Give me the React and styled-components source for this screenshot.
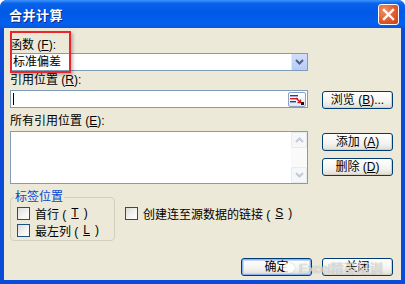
import React from 'react'
import styled, { createGlobalStyle } from 'styled-components'

const Global = createGlobalStyle`
  html, body { margin: 0; padding: 0; background: #fff; }
  * { box-sizing: border-box; }
`

const FONT = `"Liberation Sans", "Noto Sans CJK SC", sans-serif`

const App = () => {
  return (
    <>
      <Global />
      <Window>
        <TitleBar>
          <Title>合并计算</Title>
          <CloseBtn>
            <svg width="13" height="13" viewBox="0 0 13 13">
              <path d="M2 2 L11 11 M11 2 L2 11" stroke="#fff" strokeWidth="2.4" strokeLinecap="square" />
            </svg>
          </CloseBtn>
        </TitleBar>

        <Body>
          <Label $mt={0}>函数 (<u>F</u>):</Label>
          <Combo>
            <FieldText>标准偏差</FieldText>
            <DropBtn>
              <svg width="9" height="6" viewBox="0 0 9 6">
                <path d="M1 1 L4.5 4.5 L8 1" stroke="#4D6185" strokeWidth="2" fill="none" />
              </svg>
            </DropBtn>
          </Combo>

          <Label $mt={2}>引用位置 (<u>R</u>):</Label>
          <Row $mt={3}>
            <TextField>
              <Caret />
              <RefBtn>
                <svg width="14" height="11" viewBox="0 0 14 11">
                  <rect x="0" y="1" width="8" height="1.4" fill="#1D3FA8" />
                  <rect x="0" y="4" width="8" height="1.4" fill="#D21A1A" />
                  <rect x="0" y="7" width="6" height="1.4" fill="#1D3FA8" />
                  <path d="M6 4 L10.5 8.5 M10.5 5.5 L10.5 8.5 L7.5 8.5" stroke="#D21A1A" strokeWidth="1.4" fill="none" />
                  <rect x="11" y="8" width="3" height="3" fill="#111" />
                </svg>
              </RefBtn>
            </TextField>
            <Button $w={71} $mt={1}>浏览 (<u>B</u>)...</Button>
          </Row>

          <Label $mt={5}>所有引用位置 (<u>E</u>):</Label>
          <Row $mt={3}>
            <ListBox>
              <ScrollBar>
                <ScrollArrow>
                  <svg width="9" height="6" viewBox="0 0 9 6">
                    <path d="M1 5 L4.5 1.5 L8 5" stroke="#C4CAD6" strokeWidth="2" fill="none" />
                  </svg>
                </ScrollArrow>
                <ScrollArrow>
                  <svg width="9" height="6" viewBox="0 0 9 6">
                    <path d="M1 1 L4.5 4.5 L8 1" stroke="#C4CAD6" strokeWidth="2" fill="none" />
                  </svg>
                </ScrollArrow>
              </ScrollBar>
            </ListBox>
            <ButtonCol>
              <Button $w={71}>添加 (<u>A</u>)</Button>
              <Button $w={71}>删除 (<u>D</u>)</Button>
            </ButtonCol>
          </Row>

          <OptionsRow>
            <GroupBox>
              <GroupLegend>标签位置</GroupLegend>
              <CheckItem $mt={9}><CheckBox />首行 (<u>T</u>)</CheckItem>
              <CheckItem $mt={3}><CheckBox />最左列 (<u>L</u>)</CheckItem>
            </GroupBox>
            <LinkOption>
              <CheckItem><CheckBox />创建连至源数据的链接 (<u>S</u>)</CheckItem>
            </LinkOption>
          </OptionsRow>

          <Footer>
            <Button $w={71} $default>确定</Button>
            <Button $w={71}>关闭</Button>
          </Footer>

          <Highlight />
          <Watermark>
            <WmIcon />
            Excel精英培训
          </Watermark>
        </Body>
      </Window>
    </>
  )
}

const Window = styled.div`
  width: 405px;
  height: 284px;
  display: flex;
  flex-direction: column;
  font-family: ${FONT};
  font-size: 12px;
  color: #000;
  background: #0A4BD8;
  border-radius: 7px 7px 0 0;
  overflow: hidden;
`

const TitleBar = styled.div`
  height: 28px;
  flex: none;
  display: flex;
  align-items: center;
  justify-content: space-between;
  padding: 0 6px 0 9px;
  background: linear-gradient(to bottom, #3D95FF 0%, #0A63EA 12%, #0058E6 45%, #0460EE 85%, #0A55DC 100%);
`

const Title = styled.div`
  color: #fff;
  font-family: "Noto Sans CJK SC", sans-serif;
  font-weight: bold;
  font-size: 13px;
  letter-spacing: 0.5px;
  text-shadow: 1px 1px 0 #0A2A8A;
`

const CloseBtn = styled.div`
  width: 21px;
  height: 21px;
  border: 1px solid #fff;
  border-radius: 3px;
  background: radial-gradient(circle at 30% 30%, #F0906A 0%, #E05A2C 55%, #C8401A 100%);
  display: flex;
  align-items: center;
  justify-content: center;
`

const Body = styled.div`
  position: relative;
  flex: 1;
  margin: 0 4px 4px 4px;
  background: #ECE9D8;
  padding: 10px 8px 0 6px;
  display: flex;
  flex-direction: column;
`

const Label = styled.div`
  height: 14px;
  line-height: 14px;
  margin-top: ${p => p.$mt}px;
  white-space: nowrap;
  u { text-decoration: underline; }
`

const Combo = styled.div`
  margin-top: 1px;
  width: 298px;
  height: 18px;
  border: 1px solid #7F9DB9;
  background: #fff;
  display: flex;
  align-items: center;
  justify-content: space-between;
`

const FieldText = styled.div`
  padding-left: 2px;
  line-height: 16px;
`

const DropBtn = styled.div`
  width: 16px;
  height: 16px;
  background: linear-gradient(to bottom, #D3DEFB, #B8CBF6);
  border-left: 1px solid #E3EAFB;
  display: flex;
  align-items: center;
  justify-content: center;
`

const Row = styled.div`
  margin-top: ${p => p.$mt}px;
  display: flex;
  align-items: flex-start;
  gap: 14px;
`

const TextField = styled.div`
  width: 298px;
  height: 18px;
  border: 1px solid #7F9DB9;
  background: #fff;
  display: flex;
  align-items: center;
  justify-content: space-between;
  padding-left: 2px;
`

const Caret = styled.div`
  width: 1px;
  height: 12px;
  background: #000;
`

const RefBtn = styled.div`
  width: 18px;
  height: 15px;
  margin-right: 1px;
  border: 1px solid #8AA4C8;
  border-radius: 2px;
  background: linear-gradient(to bottom, #FFFFFF, #E4E8EE);
  display: flex;
  align-items: center;
  justify-content: center;
`

const Button = styled.div`
  width: ${p => p.$w}px;
  height: 18px;
  margin-top: ${p => p.$mt || 0}px;
  border: 1px solid #003C74;
  border-radius: 3px;
  background: linear-gradient(to bottom, #FFFFFF 0%, #F4F3EE 60%, #DEDDD5 100%);
  box-shadow: ${p => p.$default ? 'inset 0 0 0 1px #8CB4F2, inset 0 0 0 2px #C1D6F8' : 'inset -1px -1px 0 #D6D0C5'};
  display: flex;
  align-items: center;
  justify-content: center;
  line-height: 14px;
  white-space: nowrap;
  u { text-decoration: underline; }
`

const ListBox = styled.div`
  width: 298px;
  height: 53px;
  border: 1px solid #7F9DB9;
  background: #fff;
  display: flex;
  justify-content: flex-end;
`

const ScrollBar = styled.div`
  width: 16px;
  display: flex;
  flex-direction: column;
  justify-content: space-between;
  background: #FAFAF8;
`

const ScrollArrow = styled.div`
  height: 16px;
  border: 1px solid #E8EBF0;
  border-radius: 2px;
  background: #F6F7F9;
  display: flex;
  align-items: center;
  justify-content: center;
`

const ButtonCol = styled.div`
  margin-top: 2px;
  display: flex;
  flex-direction: column;
  gap: 7px;
`

const OptionsRow = styled.div`
  margin-top: 6px;
  display: flex;
  align-items: flex-start;
  gap: 10px;
`

const GroupBox = styled.div`
  position: relative;
  width: 105px;
  height: 51px;
  padding: 7px 0 0 7px;
  display: flex;
  flex-direction: column;
  &::before {
    content: '';
    position: absolute;
    left: 0;
    right: 0;
    top: 7px;
    bottom: 0;
    border: 1px solid #D0D0BF;
    border-radius: 4px;
  }
`

const GroupLegend = styled.div`
  position: absolute;
  left: 4px;
  top: 0;
  padding: 0 1px;
  line-height: 14px;
  background: #ECE9D8;
  color: #0046D5;
  z-index: 1;
`

const LinkOption = styled.div`
  padding-top: 16px;
`

const CheckItem = styled.div`
  position: relative;
  display: flex;
  align-items: center;
  gap: 5px;
  height: 14px;
  white-space: nowrap;
  margin-top: ${p => p.$mt || 0}px;
  u { text-decoration: underline; }
`

const CheckBox = styled.div`
  width: 13px;
  height: 13px;
  border: 1px solid #1C5180;
  background: linear-gradient(135deg, #DCDCD7 0%, #F5F5F3 60%, #FFFFFF 100%);
  flex: none;
`

const Footer = styled.div`
  margin-top: 17px;
  display: flex;
  justify-content: flex-end;
  gap: 10px;
`

const Highlight = styled.div`
  position: absolute;
  left: 6px;
  top: 3px;
  width: 61px;
  height: 42px;
  border: 2px solid #E8262B;
  box-shadow: 2px 2px 3px rgba(0, 0, 0, 0.25);
  pointer-events: none;
`

const Watermark = styled.div`
  position: absolute;
  left: 279px;
  top: 230px;
  display: flex;
  align-items: center;
  gap: 4px;
  font-size: 13px;
  color: rgba(255, 255, 255, 0.7);
  text-shadow: 0 0 1px rgba(110, 110, 110, 0.8);
  white-space: nowrap;
  pointer-events: none;
`

const WmIcon = styled.div`
  width: 12px;
  height: 10px;
  border-radius: 50%;
  background: rgba(255, 255, 255, 0.8);
  box-shadow: 0 0 1px #999;
`

export default App
